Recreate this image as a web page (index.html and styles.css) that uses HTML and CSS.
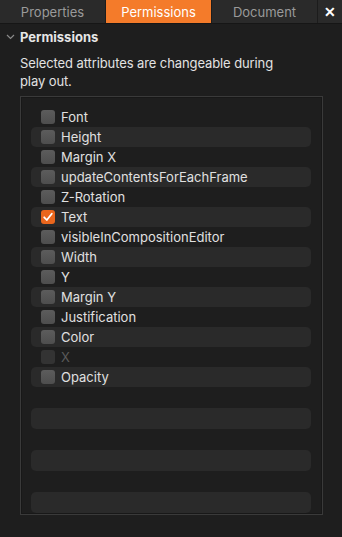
FILE: index.html
```html
<!DOCTYPE html>
<html>
<head>
<meta charset="utf-8">
<link rel="stylesheet" href="styles.css">
</head>
<body>
<div class="tabs">
  <div class="tab">Properties</div>
  <div class="tab active">Permissions</div>
  <div class="tab">Document</div>
  <div class="tab close">✕</div>
</div>
<div class="section">
  <div class="section-head">
    <svg class="chev" width="9" height="6" viewBox="0 0 9 6"><path d="M1 1 L4.5 4.5 L8 1" fill="none" stroke="#8a8a8a" stroke-width="1.2"/></svg>
    <span>Permissions</span>
  </div>
  <p class="desc">Selected attributes are changeable during<br>play out.</p>
  <div class="list">
    <div class="row"><span class="cb"></span><span class="lbl">Font</span></div>
    <div class="row"><span class="cb"></span><span class="lbl">Height</span></div>
    <div class="row"><span class="cb"></span><span class="lbl">Margin X</span></div>
    <div class="row"><span class="cb"></span><span class="lbl">updateContentsForEachFrame</span></div>
    <div class="row"><span class="cb"></span><span class="lbl">Z-Rotation</span></div>
    <div class="row"><span class="cb checked"><svg width="14" height="14" viewBox="0 0 14 14"><path d="M3.2 7.3 L5.8 10 L10.8 3.8" fill="none" stroke="#fff" stroke-width="1.8" stroke-linecap="round" stroke-linejoin="round"/></svg></span><span class="lbl">Text</span></div>
    <div class="row"><span class="cb"></span><span class="lbl">visibleInCompositionEditor</span></div>
    <div class="row"><span class="cb"></span><span class="lbl">Width</span></div>
    <div class="row"><span class="cb"></span><span class="lbl">Y</span></div>
    <div class="row"><span class="cb"></span><span class="lbl">Margin Y</span></div>
    <div class="row"><span class="cb"></span><span class="lbl">Justification</span></div>
    <div class="row"><span class="cb"></span><span class="lbl">Color</span></div>
    <div class="row disabled"><span class="cb"></span><span class="lbl">X</span></div>
    <div class="row"><span class="cb"></span><span class="lbl">Opacity</span></div>
    <div class="row empty"></div>
    <div class="row empty"></div>
    <div class="row empty"></div>
    <div class="row empty"></div>
    <div class="row empty"></div>
    <div class="row empty"></div>
  </div>
</div>
</body>
</html>
```
FILE: styles.css
```css
html, body {
  margin: 0;
  padding: 0;
  background: #1e1e1e;
  width: 342px;
  height: 537px;
  overflow: hidden;
  font-family: Inter, "Liberation Sans", sans-serif;
  -webkit-font-smoothing: antialiased;
}
.tabs {
  display: flex;
  height: 23px;
  background: #2a2a2a;
  border-bottom: 1px solid #161616;
}
.tab {
  width: 105px;
  display: flex;
  align-items: center;
  justify-content: center;
  color: #9a9a9a;
  font-size: 13px;
  border-right: 1px solid #1c1c1c;
}
.tab.active {
  background: #f47b2a;
  color: #ffffff;
}
.tab.close {
  flex: 1;
  border-right: none;
  color: #ffffff;
  font-weight: 700;
  font-size: 14px;
}
.section {
  padding: 0 19px 0 20px;
}
.section-head {
  position: relative;
  height: 24px;
  display: flex;
  align-items: center;
  margin-top: 1px;
  color: #e6e6e6;
  font-size: 13px;
  font-weight: 700;
}
.chev {
  position: absolute;
  left: -14px;
  top: 9px;
}
.desc {
  margin: 5px 0 0 0;
  color: #e2e2e2;
  font-size: 13px;
  line-height: 18px;
  letter-spacing: -0.1px;
}
.list {
  margin-top: 6px;
  border: 1px solid #3a3a3a;
  box-shadow: inset 0 0 0 1px #181818;
  padding: 10px 11px 1px 10px;
  box-sizing: border-box;
  width: 303px;
}
.row {
  height: 20px;
  display: flex;
  align-items: center;
  border-radius: 5px;
  padding-left: 10px;
  gap: 6px;
}
.row:nth-child(even) {
  background: #2a2a2a;
}
.row.empty {
  height: 21px;
}
.cb {
  width: 14px;
  height: 14px;
  border-radius: 3px;
  background: linear-gradient(#5c5c5c, #4e4e4e);
  flex: none;
  display: flex;
}
.cb.checked {
  background: #e9661d;
}
.lbl {
  color: #e0e0e0;
  font-size: 13px;
  white-space: nowrap;
}
.disabled .cb {
  background: #333333;
}
.disabled .lbl {
  color: #5a5a5a;
}
```
